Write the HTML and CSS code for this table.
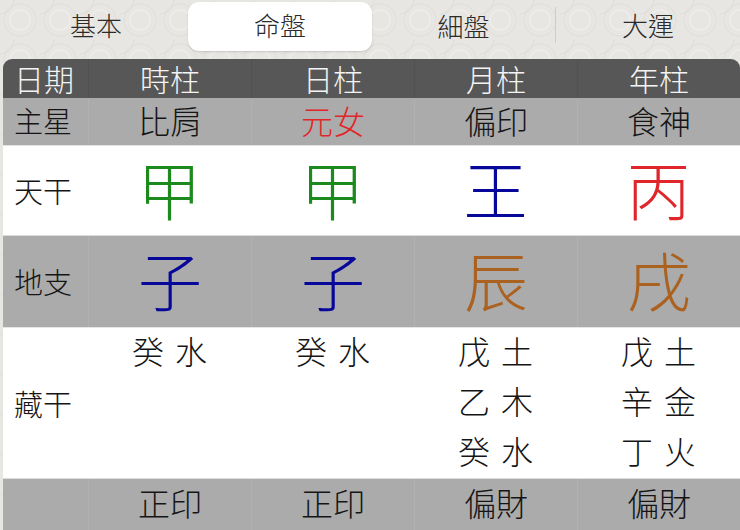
FILE: index.html
```html
<!DOCTYPE html>
<html lang="zh-Hant">
<head>
<meta charset="utf-8">
<title>命盤</title>
<link rel="stylesheet" href="styles.css">
</head>
<body>
<div class="screen">
  <nav class="tabs">
    <div class="tab">基本</div>
    <div class="tab active">命盤</div>
    <div class="tab sep">細盤</div>
    <div class="tab">大運</div>
  </nav>
  <div class="chart">
    <div class="row head">
      <div class="cell label">日期</div>
      <div class="cell">時柱</div>
      <div class="cell">日柱</div>
      <div class="cell">月柱</div>
      <div class="cell">年柱</div>
    </div>
    <div class="row gray star">
      <div class="cell label">主星</div>
      <div class="cell">比肩</div>
      <div class="cell red">元女</div>
      <div class="cell">偏印</div>
      <div class="cell">食神</div>
    </div>
    <div class="row white big stem">
      <div class="cell label">天干</div>
      <div class="cell green">甲</div>
      <div class="cell green">甲</div>
      <div class="cell blue">王</div>
      <div class="cell red">丙</div>
    </div>
    <div class="row gray big branch">
      <div class="cell label">地支</div>
      <div class="cell blue">子</div>
      <div class="cell blue">子</div>
      <div class="cell brown">辰</div>
      <div class="cell brown">戌</div>
    </div>
    <div class="row white hidden">
      <div class="cell label">藏干</div>
      <div class="cell stack"><span>癸 水</span></div>
      <div class="cell stack"><span>癸 水</span></div>
      <div class="cell stack"><span>戊 土</span><span>乙 木</span><span>癸 水</span></div>
      <div class="cell stack"><span>戊 土</span><span>辛 金</span><span>丁 火</span></div>
    </div>
    <div class="row gray foot">
      <div class="cell label"></div>
      <div class="cell">正印</div>
      <div class="cell">正印</div>
      <div class="cell">偏財</div>
      <div class="cell">偏財</div>
    </div>
  </div>
</div>
</body>
</html>
```

FILE: styles.css
```css
html, body {
  margin: 0;
  padding: 0;
}
body {
  width: 740px;
  height: 530px;
  overflow: hidden;
  font-family: "Noto Sans CJK TC", "Noto Sans CJK SC", sans-serif;
  font-weight: 300;
  color: #151515;
  background-color: #e8e6e2;
  background-image:
    radial-gradient(circle at 20px 20px, transparent 9px, rgba(255,255,255,0.45) 10px, transparent 11px, transparent 15px, rgba(0,0,0,0.03) 16px, transparent 17px),
    radial-gradient(circle at 0 0, transparent 13px, rgba(0,0,0,0.03) 14px, transparent 15px);
  background-size: 40px 40px, 40px 40px;
}
.screen {
  display: flex;
  flex-direction: column;
  height: 530px;
  padding-left: 3px;
  box-sizing: border-box;
}
.tabs {
  display: grid;
  grid-template-columns: repeat(4, 184px);
  height: 59px;
  padding-left: 1px;
}
.tab {
  display: flex;
  align-items: center;
  justify-content: center;
  font-size: 26px;
  color: #2a2a2a;
  height: 49px;
  margin-top: 2px;
  padding-bottom: 4px;
  box-sizing: border-box;
}
.tab.active {
  background: #fff;
  border-radius: 11px;
  box-shadow: 0 1px 2px rgba(0,0,0,0.15);
}
.tab.sep {
  border-right: 1px solid #cfcdca;
  height: 36px;
  margin-top: 7px;
  padding-bottom: 0;
}
.chart {
  display: flex;
  flex-direction: column;
  flex: 1;
}
.row {
  display: grid;
  grid-template-columns: 85px repeat(4, 163px);
}
.cell {
  display: flex;
  align-items: center;
  justify-content: center;
  font-size: 32px;
  line-height: 1;
}
.cell.label {
  justify-content: flex-start;
  padding-left: 11px;
  font-size: 29px;
}
.head {
  height: 39px;
  background: #575757;
  color: #f4f4f4;
  border-radius: 9px 9px 0 0;
}
.head .cell {
  font-size: 30px;
  padding-bottom: 1px;
}
.head .cell + .cell {
  border-left: 1px solid #525252;
}
.gray {
  background: #ababab;
}
.gray .cell + .cell {
  border-left: 1px solid #b1b1b1;
}
.white {
  background: #fff;
}
.star {
  height: 47px;
}
.star .cell {
  padding-bottom: 3px;
}
.stem {
  height: 89px;
  border-top: 1px solid #e2e2e2;
}
.branch {
  height: 91px;
  border-top: 1px solid #d9d9d9;
}
.big .cell {
  font-size: 64px;
  padding-bottom: 8px;
}
.big .cell.label {
  font-size: 29px;
  padding-bottom: 0;
}
.hidden {
  height: 150px;
  border-top: 1px solid #e6e6e6;
}
.stack {
  flex-direction: column;
  justify-content: flex-start;
  font-size: 32px;
  padding-top: 0;
}
.stack span {
  line-height: 50px;
  height: 50px;
  margin-top: -3px;
  margin-bottom: 3px;
  word-spacing: 4px;
}
.foot {
  flex: 1;
  border-top: 1px solid #dcdcdc;
}
.foot .cell {
  padding-bottom: 6px;
}
.red { color: #e0262a; }
.green { color: #1d8a1d; }
.blue { color: #07079a; }
.brown { color: #ab6220; }
```
